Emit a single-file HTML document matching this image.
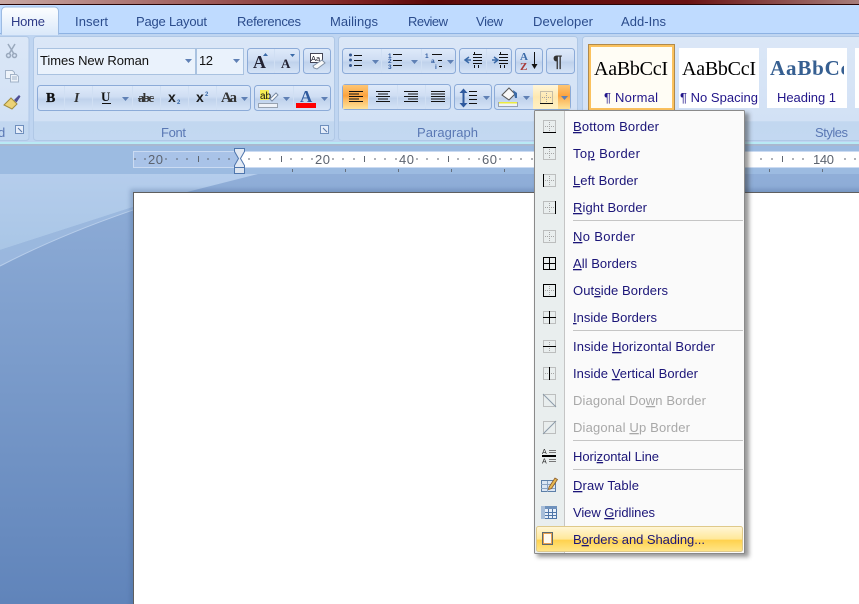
<!DOCTYPE html>
<html><head><meta charset="utf-8"><title>Word Borders Menu</title>
<style>
html,body{margin:0;padding:0;background:#fff;width:859px;height:604px;overflow:hidden}
svg{display:block;font-family:"Liberation Sans",sans-serif}
.t{font-size:13px;fill:#2b4c8c}
.m{font-size:13px;fill:#1b1578}
.d{font-size:13px;fill:#a8a8a8}
.u{text-decoration:underline}
.l{font-size:13px;fill:#5a78b4}
.r{font-size:13px;fill:#5d6470}
</style></head><body>
<svg width="859" height="604" viewBox="0 0 859 604" xmlns="http://www.w3.org/2000/svg">
<defs>
<linearGradient id="bg" x1="0" y1="0" x2="0" y2="1"><stop offset="0" stop-color="#a3bfe4"/><stop offset="1" stop-color="#6084ba"/></linearGradient>
<linearGradient id="rib" x1="0" y1="0" x2="0" y2="1"><stop offset="0" stop-color="#dbe7f7"/><stop offset=".81" stop-color="#d2e1f5"/><stop offset=".82" stop-color="#c2d7f0"/><stop offset="1" stop-color="#c3d8f1"/></linearGradient>
<linearGradient id="btn" x1="0" y1="0" x2="0" y2="1"><stop offset="0" stop-color="#dfeafa"/><stop offset=".45" stop-color="#cfdef3"/><stop offset=".55" stop-color="#bfd2ec"/><stop offset="1" stop-color="#d6e4f7"/></linearGradient>
<linearGradient id="tab" x1="0" y1="0" x2="0" y2="1"><stop offset="0" stop-color="#fdfeff"/><stop offset="1" stop-color="#dbe9fa"/></linearGradient>
<linearGradient id="act" x1="0" y1="0" x2="0" y2="1"><stop offset="0" stop-color="#fdc674"/><stop offset=".45" stop-color="#fca33f"/><stop offset=".6" stop-color="#fcb95f"/><stop offset="1" stop-color="#fee39a"/></linearGradient>
<linearGradient id="act2" x1="0" y1="0" x2="0" y2="1"><stop offset="0" stop-color="#fff6da"/><stop offset=".5" stop-color="#fee8b0"/><stop offset="1" stop-color="#fff1c4"/></linearGradient>
<linearGradient id="hi" x1="0" y1="0" x2="0" y2="1"><stop offset="0" stop-color="#fff6d8"/><stop offset=".5" stop-color="#ffe89a"/><stop offset=".55" stop-color="#ffd24e"/><stop offset="1" stop-color="#ffe68a"/></linearGradient>
<linearGradient id="top" x1="0" y1="0" x2="1" y2="0"><stop offset="0" stop-color="#c9a9a5"/><stop offset=".42" stop-color="#7c2020"/><stop offset=".5" stop-color="#5c0808"/><stop offset=".8" stop-color="#6a1212"/><stop offset="1" stop-color="#a77d7a"/></linearGradient>
<linearGradient id="sw" x1="0" y1="0" x2="0" y2="1"><stop offset="0" stop-color="#b5cdec"/><stop offset="1" stop-color="#a9c6e6"/></linearGradient>
<filter id="sh" x="-5%" y="-5%" width="112%" height="110%"><feGaussianBlur stdDeviation="2"/></filter>
<filter id="psh" x="-2%" y="-2%" width="104%" height="104%"><feGaussianBlur stdDeviation="2"/></filter>
<g id="sq"><rect x=".5" y=".5" width="12" height="12" fill="none" stroke="#8f8f8f" stroke-dasharray="1 1"/></g>
<g id="dot"><use href="#sq"/><path d="M6.500 2v9M2 6.500h9" fill="none" stroke="#a5a5a5" stroke-dasharray="1 1"/></g>
<path id="arr" d="M0 0h7l-3.500 4z" fill="#5f80b5"/>
</defs>

<!-- document area -->
<rect width="859" height="604" fill="url(#bg)"/>
<rect x="0" y="143" width="859" height="31" fill="#9cbbe1"/>
<path d="M0 174H258L187 192Q160 199 133 207L0 250Z" fill="url(#sw)"/>
<path d="M0 250L133 207V210Q60 235 0 266Z" fill="#a3bfe3" opacity=".7"/>
<path d="M0 266Q60 235 133 210" fill="none" stroke="#b7cdea"/>
<rect x="130" y="189" width="735" height="420" fill="#40608f" opacity=".3" filter="url(#psh)"/>
<rect x="133.500" y="192.500" width="730" height="420" fill="#fff" stroke="#5f5f5f"/>

<!-- title strip and tabs -->
<rect width="859" height="4" fill="url(#top)"/>
<rect y="4" width="859" height="1" fill="#2a0505"/>
<rect y="5" width="859" height="29" fill="#bfdbff"/>
<rect y="33" width="859" height="1" fill="#8db2e3"/>

<!-- ribbon -->
<rect y="34" width="859" height="108" fill="#bfd5f1"/>
<rect y="142" width="859" height="2" fill="#b8eaf5"/>
<rect y="144" width="859" height="2" fill="#a9b8d0"/>
<path d="M1.500 34V11a4 4 0 0 1 4-4h49a4 4 0 0 1 4 4v23z" fill="url(#tab)" stroke="#9dbbe2"/>
<rect x="2" y="33" width="56" height="2" fill="#dbe9fa"/>
<text class="t" x="11" y="26" textLength="34" style="fill:#2e3b87">Home</text>
<text class="t" x="75" y="26" textLength="33">Insert</text>
<text class="t" x="136" y="26" textLength="71">Page Layout</text>
<text class="t" x="237" y="26" textLength="64">References</text>
<text class="t" x="330" y="26" textLength="48">Mailings</text>
<text class="t" x="408" y="26" textLength="40">Review</text>
<text class="t" x="476" y="26" textLength="27">View</text>
<text class="t" x="533" y="26" textLength="60">Developer</text>
<text class="t" x="621" y="26" textLength="45">Add-Ins</text>

<!-- groups -->
<rect x="-8" y="36.500" width="37" height="104" rx="3" fill="url(#rib)" stroke="#b0c8e6"/>
<rect x="33.500" y="36.500" width="301" height="104" rx="3" fill="url(#rib)" stroke="#b0c8e6"/>
<rect x="338.500" y="36.500" width="239" height="104" rx="3" fill="url(#rib)" stroke="#b0c8e6"/>
<rect x="582.500" y="36.500" width="290" height="104" rx="3" fill="url(#rib)" stroke="#b0c8e6"/>
<text class="l" x="-2" y="137">d</text>
<text class="l" x="161" y="137" textLength="25">Font</text>
<text class="l" x="417" y="137" textLength="61">Paragraph</text>
<text class="l" x="815" y="137" textLength="33">Styles</text>
<g fill="none" stroke="#6f8fbd"><rect x="15.500" y="125.500" width="8" height="8" fill="#e6eefa"/><rect x="320.500" y="125.500" width="8" height="8" fill="#e6eefa"/></g>
<path d="M18 128l4 4M323 128l4 4" stroke="#5a78a8" fill="none"/>

<!-- clipboard icons -->
<g fill="none" stroke="#9aa9bd" stroke-width="1.500"><path d="M8 44l6 10M15 44l-6 10"/><circle cx="8.500" cy="55.500" r="2"/><circle cx="14.500" cy="55.500" r="2"/></g>
<g fill="#eef3fa" stroke="#a3b3c8"><path d="M5.500 70.500h7l2 2v6h-9z"/><path d="M10.500 74.500h6l2 2v5.500h-8z"/></g>
<path d="M12 79h5M12 77h5" stroke="#a3b3c8"/>
<path d="M4 105l7-7 6 6-5 5z" fill="#ecd276" stroke="#a18c3e"/><path d="M14 100l5-5 1.500 1.500-4 6z" fill="#4f4f94"/>

<!-- font controls -->
<rect x="37.500" y="48.500" width="158" height="26" fill="#eaf2fc" stroke="#a9c2e0"/>
<rect x="196.500" y="48.500" width="47" height="26" fill="#eaf2fc" stroke="#a9c2e0"/>
<text x="40" y="65" font-size="13" fill="#111" textLength="109">Times New Roman</text>
<text x="199" y="65" font-size="13" fill="#111" textLength="14">12</text>
<use href="#arr" x="185" y="59"/><use href="#arr" x="233" y="59"/>

<rect x="247.500" y="48.500" width="52" height="25" rx="3" fill="url(#btn)" stroke="#8cabd8"/>
<path d="M274.500 49v24" stroke="#d0dff3"/>
<rect x="303.500" y="48.500" width="27" height="25" rx="3" fill="url(#btn)" stroke="#8cabd8"/>
<text x="253" y="68" font-family="Liberation Serif" font-weight="bold" font-size="18" fill="#223">A</text>
<path d="M263 56h5l-2.500-3z" fill="#3a6aa8"/>
<text x="281" y="68" font-family="Liberation Serif" font-weight="bold" font-size="13" fill="#223">A</text>
<path d="M290 54h5l-2.500 3z" fill="#3a6aa8"/>
<rect x="310.500" y="53.500" width="12" height="9" fill="#fff" stroke="#445"/>
<text x="311" y="61" font-size="7.500" fill="#112">Aa</text>
<path d="M313 66l9-6 3 3-8 6-3-1z" fill="#fafafa" stroke="#7f8fa3"/>

<rect x="37.500" y="85.500" width="213" height="25" rx="3" fill="url(#btn)" stroke="#8cabd8"/>
<path d="M64.500 86v24M92.500 86v24M132.500 86v24M160.500 86v24M188.500 86v24M216.500 86v24" stroke="#d0dff3"/>
<text x="46" y="102" font-family="Liberation Serif" font-weight="bold" font-size="14" fill="#111" stroke="#111" stroke-width=".3">B</text>
<text x="74" y="102" font-family="Liberation Serif" font-style="italic" font-weight="bold" font-size="14" fill="#333">I</text>
<text x="101" y="101" font-family="Liberation Serif" font-weight="bold" font-size="13" fill="#111">U</text>
<path d="M102 103.500h9" stroke="#111"/>
<use href="#arr" x="122" y="97"/>
<text x="138" y="102" font-family="Liberation Serif" font-weight="bold" font-size="13" fill="#333" textLength="16">abc</text>
<path d="M138 98.500h16" stroke="#444"/>
<text x="168" y="102" font-weight="bold" font-size="14" fill="#1a1a1a">x</text>
<text x="177" y="104" font-size="6" font-weight="bold" fill="#3a6aa8">2</text>
<text x="196" y="102" font-weight="bold" font-size="14" fill="#1a1a1a">x</text>
<text x="205" y="96" font-size="6" font-weight="bold" fill="#3a6aa8">2</text>
<text x="221" y="102" font-family="Liberation Serif" font-weight="bold" font-size="15" fill="#333" textLength="16">Aa</text>
<use href="#arr" x="241" y="97"/>

<rect x="254.500" y="85.500" width="76" height="25" rx="3" fill="url(#btn)" stroke="#8cabd8"/>
<path d="M293.500 86v24" stroke="#d0dff3"/>
<rect x="260" y="90" width="9" height="10" fill="#f6ee54"/>
<text x="260" y="99" font-size="10" fill="#111">ab</text>
<path d="M270 99l6-6 2 2-6 6z" fill="#fff" stroke="#7a8ca5"/>
<rect x="258.500" y="103.500" width="19" height="4" fill="#eef2f8" stroke="#97a2b0"/>
<use href="#arr" x="283" y="97"/>
<text x="300" y="102" font-family="Liberation Serif" font-weight="bold" font-size="17" fill="#2f5a9e">A</text>
<rect x="296" y="103" width="20" height="5" fill="#f00"/>
<use href="#arr" x="321" y="97"/>

<!-- paragraph row 1 -->
<rect x="342.500" y="48.500" width="113" height="25" rx="3" fill="url(#btn)" stroke="#8cabd8"/>
<path d="M381.500 49v24M421.500 49v24" stroke="#d0dff3"/>
<rect x="459.500" y="48.500" width="52" height="25" rx="3" fill="url(#btn)" stroke="#8cabd8"/>
<path d="M486.500 49v24" stroke="#d0dff3"/>
<rect x="515.500" y="48.500" width="27" height="25" rx="3" fill="url(#btn)" stroke="#8cabd8"/>
<rect x="546.500" y="48.500" width="28" height="25" rx="3" fill="url(#btn)" stroke="#8cabd8"/>
<g fill="#33568f"><circle cx="350.500" cy="55" r="1.500"/><circle cx="350.500" cy="60" r="1.500"/><circle cx="350.500" cy="65.500" r="1.500"/></g>
<g font-size="6.500" font-weight="bold" fill="#2f5a9e"><text x="388" y="58">1</text><text x="388" y="63">2</text><text x="388" y="69">3</text><text x="425" y="58">1</text><text x="431" y="63">a</text><text x="435" y="69">i</text></g>
<path d="M354 55.500h8M354 60.500h8M354 65.500h8M393 54.500h9M393 60.500h9M393 65.500h9M432 54.500h10M438 60.500h4M439 66.500h3" stroke="#111" fill="none"/>
<use href="#arr" x="372" y="60"/><use href="#arr" x="411" y="60"/><use href="#arr" x="447" y="60"/>
<path d="M471 60l-6 0M469 57l-4 3 4 3" stroke="#3a6aa8" stroke-width="1.500" fill="none"/>
<path d="M473 54.500h9M473 57.500h9M473 60.500h9M473 63.500h9M474.500 52v2M474.500 65v3M478.500 65v3" stroke="#111" fill="none"/>
<path d="M492 60h5M494 57l4 3-4 3" stroke="#3a6aa8" stroke-width="1.500" fill="none"/>
<path d="M499 54.500h9M499 57.500h9M499 60.500h9M499 63.500h9M500.500 52v2M500.500 65v3M504.500 65v3" stroke="#111" fill="none"/>
<text x="520" y="60" font-family="Liberation Serif" font-size="11" font-weight="bold" fill="#3a6aa8">A</text>
<text x="520" y="70" font-family="Liberation Serif" font-size="11" font-weight="bold" fill="#a83a3a">Z</text>
<path d="M534.500 52v15" stroke="#111" fill="none"/><path d="M531.500 64h6l-3 5z" fill="#111"/>
<text x="553" y="67" font-size="17" font-weight="bold" fill="#333">¶</text>

<!-- paragraph row 2 -->
<rect x="342.500" y="84.500" width="108" height="25" rx="3" fill="url(#btn)" stroke="#8cabd8"/>
<path d="M343 85h25v24h-25z" fill="url(#act)"/>
<path d="M368.500 85v24M397.500 85v24M425.500 85v24" stroke="#d0dff3"/>
<g stroke="#111" fill="none">
<path d="M349 91.500h14M349 94h10M349 96.500h14M349 99h10M349 101.500h14"/>
<path d="M376 91.500h14M378 94h10M376 96.500h14M378 99h10M376 101.500h14"/>
<path d="M404 91.500h14M408 94h10M404 96.500h14M408 99h10M404 101.500h14"/>
<path d="M431 91.500h14M431 94h14M431 96.500h14M431 99h14M431 101.500h14"/>
</g>
<rect x="454.500" y="84.500" width="37" height="25" rx="3" fill="url(#btn)" stroke="#8cabd8"/>
<path d="M463.500 92v12" stroke="#2f5a9e" stroke-width="2"/><path d="M459.500 93l4-4.500 4 4.500zM459.500 103l4 4.500 4-4.500z" fill="#2f5a9e"/>
<path d="M469 91.500h8M469 95.500h8M469 99.500h8M469 103.500h8" stroke="#111" fill="none"/>
<use href="#arr" x="483" y="96"/>
<rect x="494.500" y="84.500" width="76" height="25" rx="3" fill="url(#btn)" stroke="#8cabd8"/>
<path d="M502 95l7-7 6 6-6 6z" fill="#f8f8f8" stroke="#555"/><path d="M513 90l4 3v5l-2 0z" fill="#3a6aa8"/>
<rect x="498.500" y="102.500" width="19" height="4" fill="#eef2f8" stroke="#97a2b0"/>
<rect x="499" y="102" width="18" height="1.500" fill="#ecec40"/>
<use href="#arr" x="523" y="96"/>
<rect x="533" y="85" width="25" height="24" fill="url(#act2)"/>
<rect x="558" y="85" width="12" height="24" fill="url(#act)"/>
<use href="#arr" x="561" y="96" style="fill:#2f5a9e"/>
<use href="#dot" x="540" y="91"/><path d="M540 103.500h13" stroke="#111"/>

<!-- styles -->
<rect x="588.500" y="44.500" width="86" height="66" fill="#fff" stroke="#b08a4c"/>
<rect x="590" y="46" width="83" height="63" fill="#fffdf5" stroke="#fbc25e" stroke-width="2"/>
<rect x="679" y="48" width="80" height="60" fill="#fff"/>
<rect x="767" y="48" width="80" height="60" fill="#fff"/>
<rect x="855" y="48" width="4" height="60" fill="#fff"/>
<text x="594" y="75" font-family="Liberation Serif" font-size="20" fill="#000" textLength="74">AaBbCcI</text>
<text x="682" y="75" font-family="Liberation Serif" font-size="20" fill="#000" textLength="74">AaBbCcI</text>
<svg x="767" y="48" width="77" height="60"><text x="3" y="27" font-family="Liberation Serif" font-weight="bold" font-size="21" fill="#365f91" textLength="80">AaBbCc</text></svg>
<text x="604" y="102" font-size="13" fill="#22168a" textLength="54">¶ Normal</text>
<text x="680" y="102" font-size="13" fill="#22168a" textLength="78">¶ No Spacing</text>
<text x="777" y="102" font-size="13" fill="#22168a" textLength="59">Heading 1</text>

<!-- ruler -->
<rect x="133.500" y="151.500" width="726" height="16" fill="#a9c3e8" stroke="#cbdbf2"/>
<rect x="240" y="152" width="619" height="15" fill="#fff"/>
<path d="M135 158v2M145 158v2M166 158v2M177 158v2M187 158v2M208 158v2M219 158v2M229 158v2M249 158v2M260 158v2M270 158v2M291 158v2M302 158v2M312 158v2M333 158v2M343 158v2M354 158v2M375 158v2M385 158v2M396 158v2M417 158v2M427 158v2M438 158v2M458 158v2M469 158v2M479 158v2M500 158v2M511 158v2M521 158v2M532 158v2M761 158v2M772 158v2M793 158v2M803 158v2M845 158v2M855 158v2" stroke="#5f6670" fill="none"/>
<path d="M198.500 156v6M281.500 156v6M364.500 156v6M448.500 156v6M782.500 156v6" stroke="#5f6670" fill="none"/>
<path d="M292.500 169v3M345.500 169v3M398.500 169v3M451.500 169v3M504.500 169v3M769.500 169v3M822.500 169v3" stroke="#66707f" fill="none"/>
<text class="r" x="148" y="164" textLength="15">20</text>
<text class="r" x="315" y="164" textLength="15">20</text>
<text class="r" x="399" y="164" textLength="15">40</text>
<text class="r" x="482" y="164" textLength="15">60</text>
<text class="r" x="813" y="164" textLength="21">140</text>
<path d="M234.500 148.500h10v3l-4 7 4 7v2.500h-10V165.500l4-7-4-7z" fill="#e3eaf4" stroke="#4f76ad"/>
<rect x="234.500" y="167.500" width="10" height="6" fill="#dde5f0" stroke="#4f76ad"/>

<!-- menu -->
<rect x="537" y="113" width="212" height="444" fill="#333" opacity=".5" filter="url(#sh)"/>
<rect x="534.500" y="110.500" width="210" height="443" rx="1" fill="#fafafa" stroke="#8a8a8a"/>
<rect x="535" y="111" width="29" height="442" fill="#e9eeee"/>
<rect x="564" y="111" width="1" height="442" fill="#c5c5c5"/>
<path d="M573 220.500h170M573 330.500h170M573 440.500h170M573 469.500h170" stroke="#c5c5c5"/>
<rect x="536.500" y="526.500" width="206" height="25" rx="2" fill="url(#hi)" stroke="#dfc98a"/>

<!-- menu icons -->
<use href="#dot" x="543" y="120"/><path d="M543 132.500h13" stroke="#000"/>
<use href="#dot" x="543" y="147"/><path d="M543 147.500h13" stroke="#000"/>
<use href="#dot" x="543" y="174"/><path d="M543.500 174v13" stroke="#000"/>
<use href="#dot" x="543" y="201"/><path d="M555.500 201v13" stroke="#000"/>
<use href="#dot" x="543" y="230"/>
<path d="M543.500 257.500h12v12h-12zM549.500 257v13M543 263.500h13" stroke="#000" fill="none"/>
<use href="#dot" x="543" y="284"/><rect x="543.500" y="284.500" width="12" height="12" fill="none" stroke="#000"/>
<use href="#sq" x="543" y="311"/><path d="M549.500 311v13M543 317.500h13" stroke="#000"/>
<use href="#dot" x="543" y="340"/><path d="M543 346.500h13" stroke="#000"/>
<use href="#dot" x="543" y="367"/><path d="M549.500 367v13" stroke="#000"/>
<use href="#sq" x="543" y="394"/><path d="M543 394l13 13" stroke="#8a9aa8"/>
<use href="#sq" x="543" y="421"/><path d="M543 434l13-13" stroke="#8a9aa8"/>
<path d="M549 450.500h7M549 452.500h7M549 459.500h7M549 461.500h7" stroke="#777" fill="none"/>
<rect x="542" y="455" width="14" height="2" fill="#000"/>
<text x="542" y="454" font-size="7" fill="#222">A</text><text x="542" y="463.500" font-size="7" fill="#222">A</text>
<rect x="541.500" y="480.500" width="14" height="11" fill="#dbe6f3" stroke="#5c7fa8"/>
<path d="M541 484.500h14M547.500 481v11M541 488.500h14" stroke="#8aa3c2"/>
<path d="M549 487l6-9 2.500 1.500-6 9-3 1z" fill="#e5b850" stroke="#8a5a2a" stroke-width=".8"/>
<rect x="541.500" y="506.500" width="15" height="12" fill="#e8f0fa" stroke="#4f76a8"/>
<rect x="541" y="506" width="16" height="3" fill="#6f92bc"/><rect x="541" y="506" width="4" height="13" fill="#a7bed9"/>
<path d="M545 512.500h11M545 515.500h11M548.500 509v9M552.500 509v9" stroke="#4f76a8"/>
<rect x="542.500" y="532.500" width="10" height="12" fill="#fffaf0" stroke="#5d6a70"/>
<rect x="543.500" y="533.500" width="8" height="10" fill="none" stroke="#e8a050"/>

<!-- menu text -->
<text class="m" x="573" y="131" textLength="86"><tspan class="u">B</tspan>ottom Border</text>
<text class="m" x="573" y="158" textLength="67">To<tspan class="u">p</tspan> Border</text>
<text class="m" x="573" y="185" textLength="65"><tspan class="u">L</tspan>eft Border</text>
<text class="m" x="573" y="212" textLength="74"><tspan class="u">R</tspan>ight Border</text>
<text class="m" x="573" y="241" textLength="62"><tspan class="u">N</tspan>o Border</text>
<text class="m" x="573" y="268" textLength="64"><tspan class="u">A</tspan>ll Borders</text>
<text class="m" x="573" y="295" textLength="95">Out<tspan class="u">s</tspan>ide Borders</text>
<text class="m" x="573" y="322" textLength="84"><tspan class="u">I</tspan>nside Borders</text>
<text class="m" x="573" y="351" textLength="142">Inside <tspan class="u">H</tspan>orizontal Border</text>
<text class="m" x="573" y="378" textLength="125">Inside <tspan class="u">V</tspan>ertical Border</text>
<text class="d" x="573" y="405" textLength="133">Diagonal Do<tspan class="u">w</tspan>n Border</text>
<text class="d" x="573" y="432" textLength="117">Diagonal <tspan class="u">U</tspan>p Border</text>
<text class="m" x="573" y="461" textLength="86">Hori<tspan class="u">z</tspan>ontal Line</text>
<text class="m" x="573" y="490" textLength="66"><tspan class="u">D</tspan>raw Table</text>
<text class="m" x="573" y="517" textLength="82">View <tspan class="u">G</tspan>ridlines</text>
<text class="m" x="573" y="544" textLength="132">B<tspan class="u">o</tspan>rders and Shading...</text>
</svg>
</body></html>
